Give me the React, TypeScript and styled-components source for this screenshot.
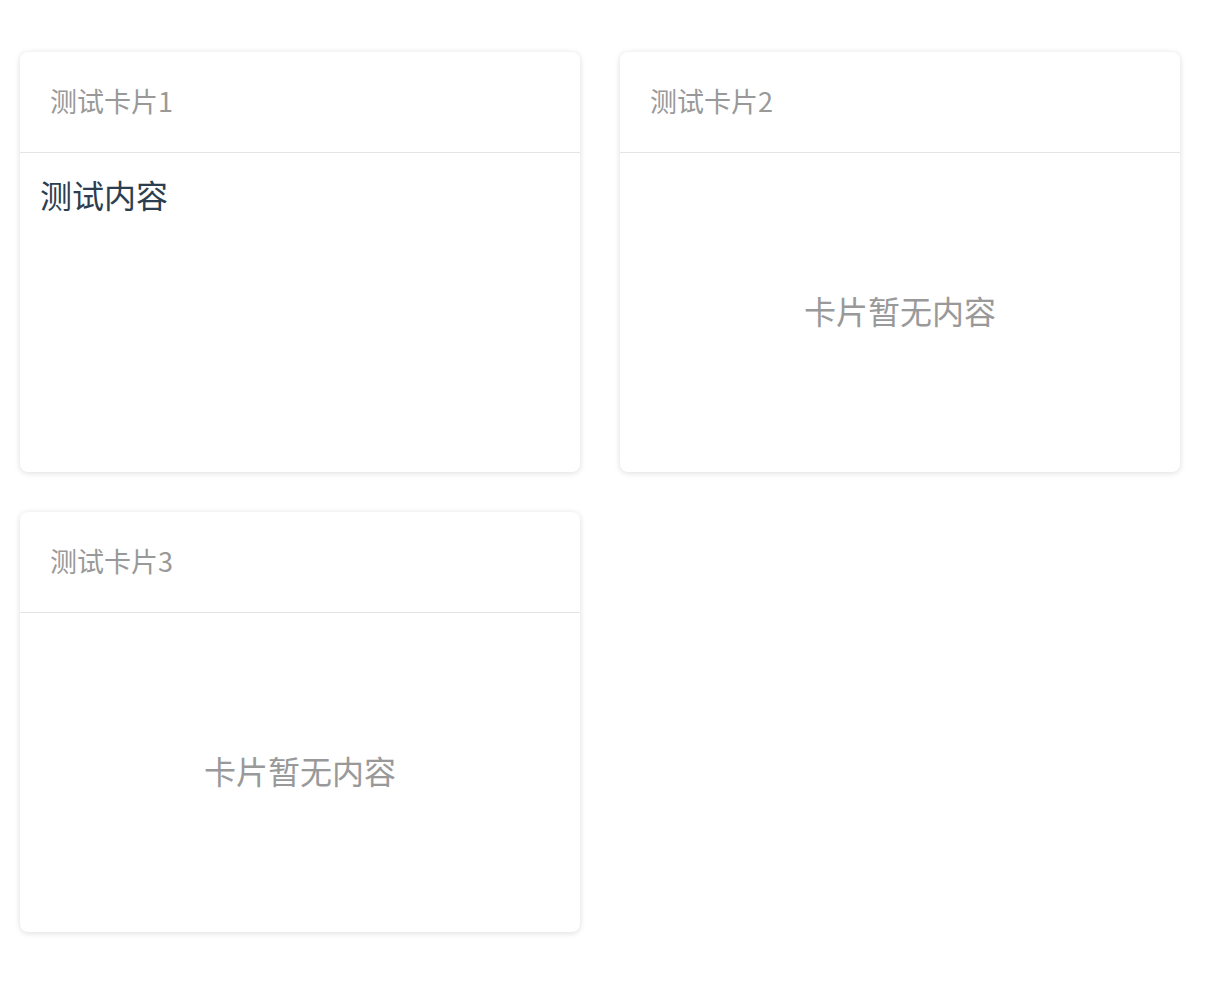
import React from "react";
import styled, { createGlobalStyle } from "styled-components";

const GlobalStyle = createGlobalStyle`
  html, body {
    margin: 0;
    padding: 0;
    background: #ffffff;
    font-family: "Noto Sans CJK SC", "Noto Sans", sans-serif;
  }
`;

const Grid = styled.div`
  display: grid;
  grid-template-columns: 560px 560px;
  grid-auto-rows: 420px;
  gap: 40px;
  padding: 52px 0 52px 20px;
`;

const Card = styled.div`
  display: flex;
  flex-direction: column;
  background: #ffffff;
  border-radius: 8px;
  box-shadow: 0 1px 6px rgba(0, 0, 0, 0.14);
  overflow: hidden;
`;

const Header = styled.div`
  flex: 0 0 101px;
  box-sizing: border-box;
  height: 101px;
  display: flex;
  align-items: center;
  padding: 0 30px 3px;
  border-bottom: 1px solid #e4e4e4;
  font-size: 27px;
  color: #999999;
`;

const Body = styled.div<{ $empty?: boolean }>`
  flex: 1;
  display: flex;
  padding: ${(p) => (p.$empty ? "14px 20px 20px" : "17px 20px 20px")};
  font-size: 32px;
  line-height: 48px;
  color: ${(p) => (p.$empty ? "#999999" : "#2c3e50")};
  align-items: ${(p) => (p.$empty ? "center" : "flex-start")};
  justify-content: ${(p) => (p.$empty ? "center" : "flex-start")};
`;

const cards = [
  { title: "测试卡片1", content: "测试内容" },
  { title: "测试卡片2", content: "" },
  { title: "测试卡片3", content: "" },
];

export default function App() {
  return (
    <>
      <GlobalStyle />
      <Grid>
        {cards.map((c) => (
          <Card key={c.title}>
            <Header>{c.title}</Header>
            <Body $empty={!c.content}>{c.content || "卡片暂无内容"}</Body>
          </Card>
        ))}
      </Grid>
    </>
  );
}
